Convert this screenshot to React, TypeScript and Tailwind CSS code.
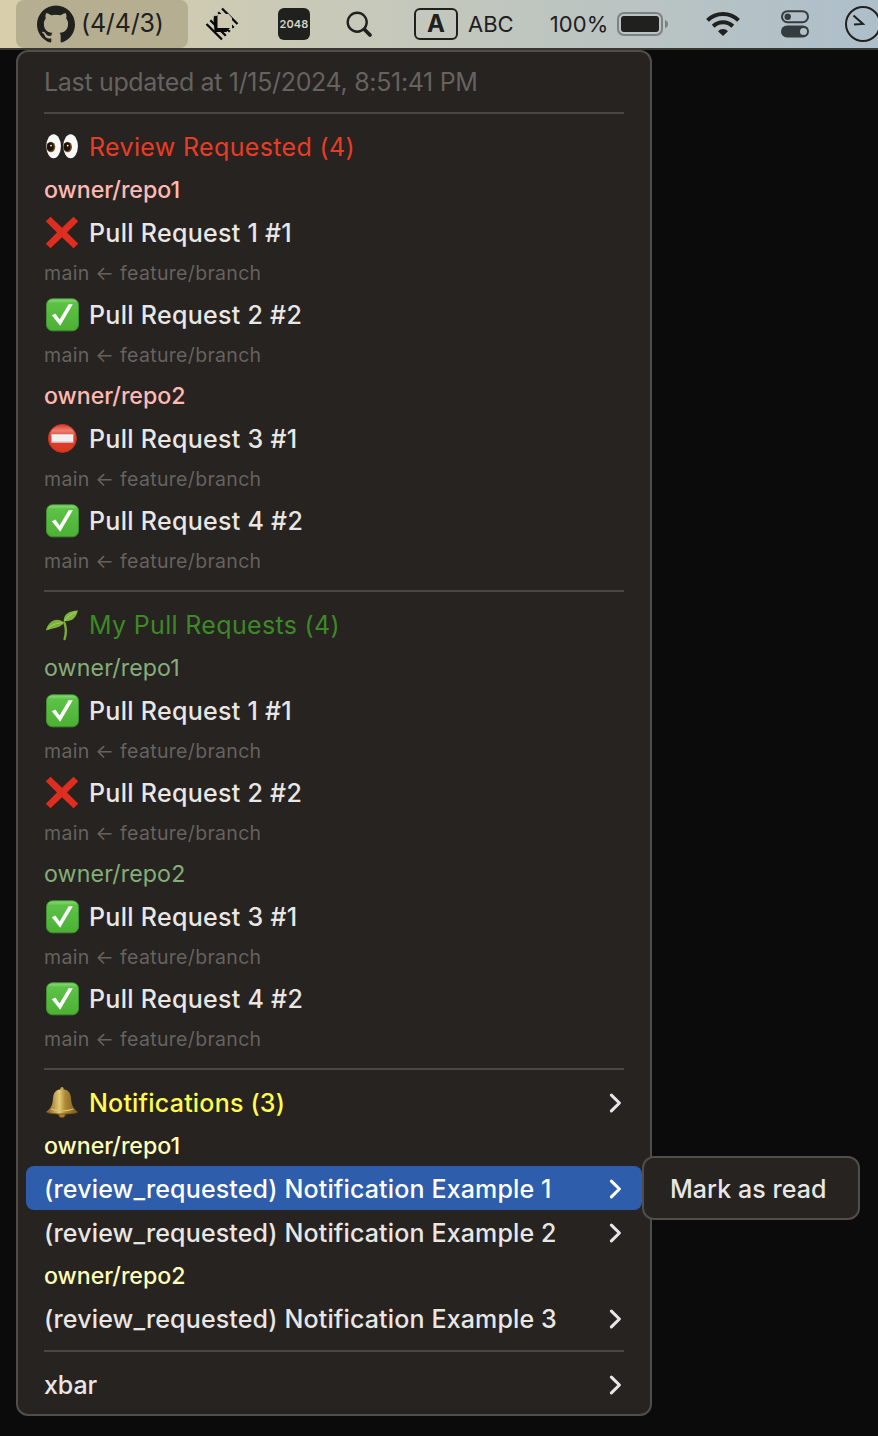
import { SiGithub } from 'react-icons/si';

type Status = 'fail' | 'pass' | 'blocked';

type PullRequest = {
    title: string;
    status: Status;
};

type Repo = {
    name: string;
    pulls: PullRequest[];
};

const reviewRequested: Repo[] = [
    {
        name: 'owner/repo1',
        pulls: [
            { title: 'Pull Request 1 #1', status: 'fail' },
            { title: 'Pull Request 2 #2', status: 'pass' },
        ],
    },
    {
        name: 'owner/repo2',
        pulls: [
            { title: 'Pull Request 3 #1', status: 'blocked' },
            { title: 'Pull Request 4 #2', status: 'pass' },
        ],
    },
];

const myPullRequests: Repo[] = [
    {
        name: 'owner/repo1',
        pulls: [
            { title: 'Pull Request 1 #1', status: 'pass' },
            { title: 'Pull Request 2 #2', status: 'fail' },
        ],
    },
    {
        name: 'owner/repo2',
        pulls: [
            { title: 'Pull Request 3 #1', status: 'pass' },
            { title: 'Pull Request 4 #2', status: 'pass' },
        ],
    },
];

const CrossMark = () => (
    <svg viewBox="0 0 34 34" className="h-[34px] w-[34px]">
        <path d="M5.5 0.8 17 11.8 28.5 0.8 33.2 5.3 22 16.5 33.2 27.7 28.5 32.2 17 21.2 5.5 32.2 0.8 27.7 12 16.5 0.8 5.3Z" fill="#dd2e1f" />
    </svg>
);

const CheckMark = () => (
    <svg viewBox="0 0 34 34" className="h-[34px] w-[34px]">
        <defs>
            <linearGradient id="check" x1="0" y1="0" x2="0" y2="1">
                <stop offset="0" stopColor="#8fdc7c" />
                <stop offset="0.14" stopColor="#5cc246" />
                <stop offset="1" stopColor="#4cb035" />
            </linearGradient>
        </defs>
        <rect x="1.5" y="0.8" width="32" height="32" rx="6" fill="url(#check)" stroke="#3c9230" />
        <path d="M6.8 17.2 10.4 15.6 14.6 21.6 23.6 6.3 27.8 6.3 15.2 27.8Z" fill="#fff" />
    </svg>
);

const NoEntry = () => (
    <svg viewBox="0 0 34 34" className="h-[34px] w-[34px]">
        <defs>
            <linearGradient id="no-entry" x1="0" y1="0" x2="0" y2="1">
                <stop offset="0" stopColor="#d63a28" />
                <stop offset="0.22" stopColor="#ea7f70" />
                <stop offset="0.45" stopColor="#dc4432" />
                <stop offset="1" stopColor="#d8371f" />
            </linearGradient>
        </defs>
        <circle cx="17.4" cy="16.4" r="14" fill="url(#no-entry)" stroke="#cf2f1f" />
        <rect x="6.5" y="12.2" width="21.8" height="8.2" rx="0.5" fill="#f1f0ef" />
        <path d="M6.5 20h21.8" stroke="#c9bdbb" />
    </svg>
);

const Eyes = () => (
    <svg viewBox="0 0 34 34" className="h-[34px] w-[34px]">
        <ellipse cx="8.6" cy="16.3" rx="7.3" ry="12" fill="#f8f8f8" />
        <ellipse cx="25.6" cy="16.3" rx="7.3" ry="12" fill="#f8f8f8" />
        <ellipse cx="5.9" cy="17" rx="4.4" ry="5.2" fill="#7a5220" />
        <ellipse cx="22.6" cy="17" rx="4.4" ry="5.2" fill="#7a5220" />
        <ellipse cx="5.4" cy="16.7" rx="3.4" ry="4.3" fill="#1d1108" />
        <ellipse cx="22.1" cy="16.7" rx="3.4" ry="4.3" fill="#1d1108" />
        <circle cx="6" cy="15.6" r="0.9" fill="#fff" />
        <circle cx="22.7" cy="15.6" r="0.9" fill="#fff" />
    </svg>
);

const Seedling = () => (
    <svg viewBox="0 0 34 34" className="h-[34px] w-[34px]">
        <path d="M19.3 14.5C21.4 20 21.4 25 19.6 31" fill="none" stroke="#7cab3b" strokeWidth="2.4" strokeLinecap="round" />
        <path d="M18.8 14.4C18 7 23.5 2.8 33 2.6 31 10 27 14 19.5 13Z" fill="#7fb840" />
        <path d="M18.8 14.2C16.5 20 9 19.5 0.8 22.6 3.2 13 11.5 8.5 18.8 14.2Z" fill="#79b03b" />
        <path d="M19.5 13C22 9 26 6 31 4M3 20.5C7.5 16 13 14.8 18 14.8" fill="none" stroke="#a8cf63" />
    </svg>
);

const Bell = () => (
    <svg viewBox="0 0 34 34" className="h-[34px] w-[34px]">
        <defs>
            <linearGradient id="bell" x1="0" y1="0" x2="1" y2="0">
                <stop offset="0.1" stopColor="#94712a" />
                <stop offset="0.42" stopColor="#e4cb76" />
                <stop offset="0.6" stopColor="#ad8a37" />
                <stop offset="1" stopColor="#74571f" />
            </linearGradient>
        </defs>
        <circle cx="17" cy="28.2" r="3.4" fill="#a9823a" stroke="#6d4b18" />
        <circle cx="17" cy="2.8" r="1.7" fill="#c4a04a" />
        <path d="M17 3.2C22.8 3.2 25.6 6.5 26 12 26.4 19.5 28.8 23 33 26 29.5 29 5 29 1 26 5.4 23 7.6 19.5 8 12 8.4 6.5 11.2 3.2 17 3.2Z" fill="url(#bell)" />
        <path d="M6 23C12 25.5 22 25.5 28.3 23" fill="none" stroke="#d9c06f" strokeWidth="1.2" />
        <path d="M2 26.5C9 28.6 25 28.6 32.3 26.5" fill="none" stroke="#765317" />
    </svg>
);

const statusIcons = { fail: CrossMark, pass: CheckMark, blocked: NoEntry };

const Chevron = () => (
    <svg viewBox="0 0 14 22" className="ml-auto h-[22px] w-[14px] shrink-0">
        <path d="M2.4 3.2 10.4 11 2.4 18.8" fill="none" stroke="currentColor" strokeWidth="3.1" strokeLinecap="round" strokeLinejoin="round" />
    </svg>
);

const Separator = () => <div className="mx-[26px] my-2.5 h-0.5 bg-[#4b4743]" />;

const RepoName = ({ name, color }: { name: string; color: string }) => (
    <div className={`flex h-[42px] items-center px-[26px] pt-1 text-[23.2px] ${color}`}>{name}</div>
);

function RepoList({ repos, color }: { repos: Repo[]; color: string }) {
    return (
        <>
            {repos.map((repo) => (
                <div key={repo.name}>
                    <RepoName name={repo.name} color={color} />
                    {repo.pulls.map((pull) => {
                        const Icon = statusIcons[pull.status];
                        return (
                            <div key={pull.title}>
                                <div className="flex h-11 items-center gap-[10px] px-[27px] pt-0.5">
                                    <Icon />
                                    <span className="font-medium tracking-[0.29px]">{pull.title}</span>
                                </div>
                                <div className="flex h-[38px] items-center px-[26px] pt-0.5 text-[19.5px] tracking-[0.32px] text-[#66625f]">
                                    main ← feature/branch
                                </div>
                            </div>
                        );
                    })}
                </div>
            ))}
        </>
    );
}

function MenuBar() {
    return (
        <header className="flex h-12 items-center overflow-hidden bg-linear-to-r from-[#d8ceaa] via-[#c5c8bb] via-45% to-[#aebfca] text-[#20201e]">
            <div className="ml-4 flex h-12 w-[172px] shrink-0 items-center rounded-lg bg-[#b5ae90] pl-[21px]">
                <SiGithub className="h-[38px] w-[38px]" />
                <span className="ml-[6px] text-[25px] tracking-[-0.2px]">(4/4/3)</span>
            </div>

            <svg viewBox="0 0 34 34" className="ml-[17px] h-[34px] w-[34px] shrink-0">
                <path d="M1.5 17 17 32.5M5.3 13.2 20.8 28.7M9.2 9.2 24.8 24.8M13.2 5.3 28.7 20.8M17 1.5 32.5 17" fill="none" stroke="#090909" strokeWidth="2.3" />
                <path d="M12 9.5 14.5 7h9l3.5 4v12H12Z" fill="#cecab1" />
                <path d="M8.5 11.5 12.5 8v13H25l-3.5 4H9.5Z" fill="#090909" />
            </svg>

            <div className="ml-[39px] flex h-8 w-8 shrink-0 items-center justify-center rounded-md bg-[#20201e] text-[11px] font-semibold tracking-[0.1px] text-[#d5d4c6]">
                2048
            </div>

            <svg viewBox="0 0 28 28" className="ml-[35px] h-7 w-7 shrink-0" fill="none" stroke="currentColor" strokeLinecap="round">
                <circle cx="12.2" cy="12.2" r="9.5" strokeWidth="2.4" />
                <path d="m19.5 19.5 5.5 5.5" strokeWidth="3.8" />
            </svg>

            <div className="ml-[41px] flex h-8 w-11 shrink-0 items-center justify-center rounded-md border-2 border-[#20201e] text-[24px] font-bold">A</div>
            <span className="ml-[10px] text-[22px]">ABC</span>
            <span className="ml-[36px] text-[22px] tracking-[0.1px]">100%</span>

            <svg viewBox="0 0 52 24" className="ml-[9px] h-6 w-[52px] shrink-0">
                <rect x="1" y="1" width="44" height="22" rx="6" fill="none" stroke="#7d8281" strokeWidth="2" />
                <rect x="4" y="4" width="38" height="16" rx="3" fill="#20201e" />
                <path d="M48 8q3 1 3 4t-3 4Z" fill="#7d8281" />
            </svg>

            <svg viewBox="0 0 34 26" className="ml-[37px] h-[26px] w-[34px] shrink-0" fill="none" stroke="#20201e">
                <path d="M1.5 9.3a22 22 0 0 1 31 0" strokeWidth="4" />
                <path d="M7.2 15.2a14 14 0 0 1 19.6 0" strokeWidth="4" />
                <path d="m17 25-5-4.8a7 7 0 0 1 10 0Z" fill="#20201e" stroke="none" />
            </svg>

            <svg viewBox="0 0 28 28" className="ml-[41px] h-7 w-7 shrink-0">
                <rect x="1" y="1.2" width="26" height="11" rx="5.5" fill="none" stroke="#343c3f" strokeWidth="2" />
                <circle cx="6.7" cy="6.7" r="3.2" fill="#343c3f" />
                <rect x="0" y="15.5" width="28" height="12" rx="6" fill="#343c3f" />
                <circle cx="22.5" cy="21.5" r="3.5" fill="#b3c1c7" />
            </svg>

            <svg viewBox="0 0 36 36" className="ml-9 h-9 w-9 shrink-0" fill="none" stroke="#20201e" strokeWidth="2">
                <circle cx="18" cy="18" r="17" />
                <path d="M8.5 9.5 18 18 9 18.5" />
            </svg>
        </header>
    );
}

export default function App() {
    return (
        <div className="h-[1436px] w-[878px] overflow-hidden bg-[#0b0b0b] font-[Inter,sans-serif] whitespace-nowrap">
            <MenuBar />
            <div className="h-0.5 bg-[#343632]" />

            <main className="ml-4 w-[636px] rounded-xl border-2 border-[#514d49] bg-[#272320] py-2 text-[25px] leading-none text-[#e8e7e6]">
                <div className="flex h-[42px] items-center px-[26px] pt-0.5 tracking-[-0.33px] text-[#66625f]">Last updated at 1/15/2024, 8:51:41 PM</div>
                <Separator />

                <section>
                    <div className="flex h-11 items-center gap-[10px] px-[27px] pt-0.5 tracking-[0.35px] text-[#e93c25]">
                        <Eyes />
                        Review Requested (4)
                    </div>
                    <RepoList repos={reviewRequested} color="text-[#ffb9b2] font-medium tracking-[-0.05px]" />
                </section>
                <Separator />

                <section>
                    <div className="flex h-11 items-center gap-[10px] px-[27px] pt-0.5 tracking-[0.33px] text-[#3c8a26]">
                        <Seedling />
                        My Pull Requests (4)
                    </div>
                    <RepoList repos={myPullRequests} color="text-[#84ae7a] tracking-[0.12px]" />
                </section>
                <Separator />

                <section>
                    <div className="flex h-11 items-center gap-[10px] px-[27px] pt-0.5 font-medium tracking-[0.2px] text-[#fffb4f]">
                        <Bell />
                        Notifications (3)
                        <span className="ml-auto text-[#e8e7e6]"><Chevron /></span>
                    </div>
                    <RepoName name="owner/repo1" color="text-[#ffffb9] font-medium tracking-[-0.05px]" />

                    {/* Selected item with its submenu open */}
                    <div className="relative mx-2 flex h-11 items-center rounded-lg bg-[#2d5dab] pr-[19px] pl-[18px] pt-0.5 font-medium tracking-[0.14px] text-white">
                        (review_requested) Notification Example 1
                        <Chevron />
                        <div className="absolute top-[-10px] left-full flex h-16 w-[218px] items-center rounded-xl border-2 border-[#514d49] bg-[#272320] pt-0.5 pl-[26px] tracking-[0.05px] text-[#e8e7e6]">
                            Mark as read
                        </div>
                    </div>
                    <div className="flex h-11 items-center pr-[27px] pl-[26px] pt-0.5 font-medium tracking-[0.14px]">
                        (review_requested) Notification Example 2
                        <Chevron />
                    </div>
                    <RepoName name="owner/repo2" color="text-[#ffffb9] font-medium tracking-[-0.05px]" />
                    <div className="flex h-11 items-center pr-[27px] pl-[26px] pt-0.5 font-medium tracking-[0.14px]">
                        (review_requested) Notification Example 3
                        <Chevron />
                    </div>
                </section>
                <Separator />

                <div className="flex h-11 items-center pr-[27px] pl-[26px] pt-0.5 font-medium tracking-[-0.1px]">
                    xbar
                    <Chevron />
                </div>
            </main>
        </div>
    );
}
